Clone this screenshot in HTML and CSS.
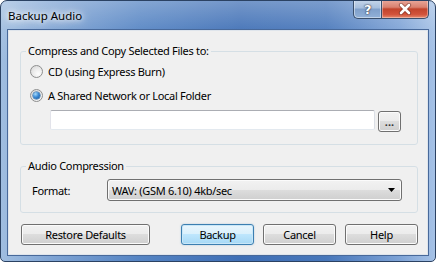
FILE: index.html
```html
<!DOCTYPE html>
<html>
<head>
<meta charset="utf-8">
<link rel="stylesheet" href="styles.css">
</head>
<body>
<div class="window">
  <div class="titlebar">
    <span class="title">Backup Audio</span>
    <div class="caption-btns">
      <div class="cbtn help-btn"><span>?</span></div>
      <div class="cbtn close-btn">
        <svg width="14" height="12" viewBox="0 0 14 12">
          <path d="M3 2 L11 10 M11 2 L3 10" stroke="#5a1b12" stroke-width="4.2" stroke-linecap="round" fill="none" opacity="0.55"/>
          <path d="M3 2 L11 10 M11 2 L3 10" stroke="#ffffff" stroke-width="2.6" stroke-linecap="round" fill="none"/>
        </svg>
      </div>
    </div>
  </div>
  <div class="client">
    <fieldset class="group g1">
      <legend>Compress and Copy Selected Files to:</legend>
      <div class="gbody">
        <div class="opt"><span class="radio"></span><span>CD (using Express Burn)</span></div>
        <div class="opt second"><span class="radio checked"></span><span>A Shared Network or Local Folder</span></div>
        <div class="pathrow">
          <div class="textbox"></div>
          <div class="browse">...</div>
        </div>
      </div>
    </fieldset>
    <fieldset class="group g2">
      <legend>Audio Compression</legend>
      <div class="gbody">
        <div class="formatrow">
          <span class="flabel">Format:</span>
          <div class="select">
            <span>WAV: (GSM 6.10) 4kb/sec</span>
            <svg class="arrow" width="7" height="4" viewBox="0 0 7 4"><path d="M0 0 H7 L3.5 4 Z" fill="#000"/></svg>
          </div>
        </div>
      </div>
    </fieldset>
    <div class="buttons">
      <div class="btn restore">Restore Defaults</div>
      <div class="btn default push">Backup</div>
      <div class="btn">Cancel</div>
      <div class="btn">Help</div>
    </div>
  </div>
</div>
</body>
</html>
```
FILE: styles.css
```css
html, body {
  margin: 0;
  padding: 0;
  background: #ffffff;
}
body {
  font-family: "Noto Sans", "Open Sans", sans-serif;
  font-size: 11px;
  letter-spacing: -0.3px;
  color: #000;
}
.window {
  width: 436px;
  height: 262px;
  box-sizing: border-box;
  border: 1px solid #2b4263;
  border-radius: 7px 7px 5px 5px;
  padding: 0 7px 6px;
  display: flex;
  flex-direction: column;
  overflow: hidden;
  background:
    linear-gradient(180deg, rgba(255,255,255,0.28) 0px, rgba(255,255,255,0.08) 28px, rgba(255,255,255,0) 60px),
    linear-gradient(90deg, #9fbde0 0%, #7ea3d3 12%, #5584c3 32%, #3f6fb5 55%, #4877ba 75%, #7ea3d6 92%, #a6c2e6 100%);
}
.titlebar {
  height: 29px;
  display: flex;
  align-items: flex-start;
  justify-content: space-between;
  flex: none;
}
.title {
  margin-top: 7px;
  line-height: 16px;
  font-size: 11.5px;
  letter-spacing: 0;
  padding: 0 2px 0 0;
  text-shadow: 0 0 5px #fff, 0 0 9px #fff, 0 0 14px rgba(255,255,255,0.9);
}
.caption-btns {
  display: flex;
  margin-top: -1px;
  margin-right: -1px;
}
.cbtn {
  height: 19px;
  box-sizing: border-box;
  border: 1px solid #3a4f6c;
  border-top: none;
  display: flex;
  align-items: center;
  justify-content: center;
}
.help-btn {
  width: 28px;
  border-radius: 0 0 0 5px;
  border-right: none;
  background: linear-gradient(180deg, #c6d6ea 0%, #a6bedd 45%, #7f9fca 50%, #92b1d8 100%);
  box-shadow: inset 0 0 0 1px rgba(255,255,255,0.45);
}
.help-btn span {
  font-family: "DejaVu Sans", sans-serif;
  font-weight: bold;
  font-size: 13px;
  line-height: 13px;
  color: #fff;
  text-shadow: 0 0 1px #223, 0 0 2px #334;
}
.close-btn {
  width: 48px;
  border-radius: 0 0 5px 0;
  background: linear-gradient(180deg, #e9a99c 0%, #d9816f 40%, #c2442c 50%, #d2533b 80%, #e68a6e 100%);
  box-shadow: inset 0 0 0 1px rgba(255,255,255,0.35);
}
.client {
  flex: none;
  height: 225px;
  box-sizing: border-box;
  border: 1px solid #dfe5ec;
  box-shadow: 0 0 0 1px #48699a;
  background: #f0f0f0;
  padding: 12px 9px 0 11px;
  display: flex;
  flex-direction: column;
}
.group {
  margin: 0;
  padding: 0;
  min-width: 0;
  border: 1px solid #d5dfe5;
  border-radius: 3px;
}
.group legend {
  margin-left: 5px;
  padding: 0 2px;
  line-height: 16px;
}
.gbody {
  display: flex;
  flex-direction: column;
}
.g1 .gbody {
  padding: 4px 0 12px;
}
.opt {
  height: 16px;
  display: flex;
  align-items: center;
  gap: 5px;
  padding-left: 9px;
}
.opt.second {
  margin-top: 8px;
}
.radio {
  width: 13px;
  height: 13px;
  box-sizing: border-box;
  border-radius: 50%;
  border: 1px solid #8e8f8f;
  background: radial-gradient(circle at 65% 70%, #fdfdfd 0%, #ececec 45%, #d3d3d3 100%);
  position: relative;
  flex: none;
}
.radio.checked::after {
  content: "";
  position: absolute;
  left: 2px;
  top: 2px;
  width: 7px;
  height: 7px;
  border-radius: 50%;
  background: radial-gradient(circle at 35% 30%, #a6dbfb 0%, #3d8bd5 45%, #0d4f94 100%);
  box-shadow: 0 0 0 0.5px #1d5a94;
}
.pathrow {
  margin-top: 7px;
  display: flex;
  align-items: flex-start;
  padding-left: 29px;
  gap: 3px;
}
.textbox {
  width: 325px;
  height: 20px;
  box-sizing: border-box;
  background: #fff;
  border: 1px solid;
  border-color: #abadb3 #dbdfe6 #e3e9ef #e2e3ea;
  border-radius: 2px;
}
.browse {
  width: 23px;
  height: 21px;
  margin-top: 1px;
  box-sizing: border-box;
  border: 1px solid #707070;
  border-radius: 3px;
  background: linear-gradient(180deg, #f2f2f2 0%, #ebebeb 50%, #dddddd 50%, #cfcfcf 100%);
  box-shadow: inset 0 0 0 1px #fbfbfb;
  font-size: 11px;
  font-weight: bold;
  line-height: 12px;
  text-align: center;
  padding-top: 4px;
  letter-spacing: 0px;
  color: #333;
}
.g2 {
  margin-top: 13px;
}
.g2 .gbody {
  padding: 5px 0 11px;
}
.formatrow {
  display: flex;
  align-items: center;
  padding-left: 11px;
  height: 22px;
}
.flabel {
  width: 75px;
  flex: none;
}
.select {
  width: 295px;
  height: 22px;
  box-sizing: border-box;
  border: 1px solid #707070;
  border-radius: 3px;
  background: linear-gradient(180deg, #f2f2f2 0%, #ebebeb 50%, #dddddd 50%, #cfcfcf 100%);
  box-shadow: inset 0 0 0 1px #fbfbfb;
  display: flex;
  align-items: center;
  justify-content: space-between;
  padding: 0 6px 0 4px;
}
.buttons {
  margin-top: 11px;
  display: flex;
  gap: 9px;
  padding-left: 1px;
}
.btn {
  width: 73px;
  height: 21px;
  box-sizing: border-box;
  border: 1px solid #707070;
  border-radius: 3px;
  background: linear-gradient(180deg, #f2f2f2 0%, #ebebeb 50%, #dddddd 50%, #cfcfcf 100%);
  box-shadow: inset 0 0 0 1px #fbfbfb;
  display: flex;
  align-items: center;
  justify-content: center;
  line-height: 16px;
}
.btn.restore {
  width: 129px;
}
.btn.push {
  margin-left: auto;
}
.btn.default {
  border-color: #3c7fb1;
  background: linear-gradient(180deg, #eaf6fd 0%, #d9f0fc 50%, #bee6fd 50%, #a7d9f5 100%);
  box-shadow: inset 0 0 0 1px #c9e7f8, 0 0 2px rgba(60,127,177,0.35);
}
```
